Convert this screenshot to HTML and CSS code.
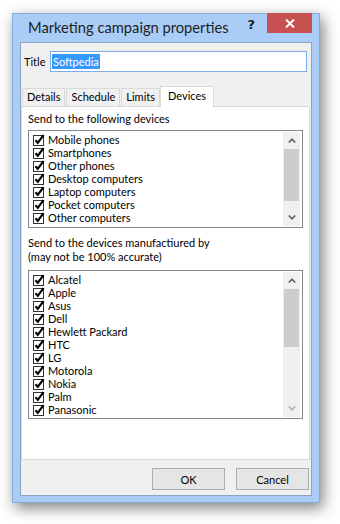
FILE: index.html
```html
<!DOCTYPE html>
<html>
<head>
  <title>Marketing campaign properties</title>
  <link rel="stylesheet" href="styles.css">
</head>
<body>

  <div class="window">
    <div class="titlebar">
      <span class="caption">Marketing campaign properties</span>
      <span class="help">?</span>
      <span class="close">
        <svg width="10" height="9" viewBox="0 0 10 9"><path d="M1 0.5 L9 8.5 M9 0.5 L1 8.5" stroke="#fff" stroke-width="2"/></svg>
      </span>
    </div>

    <div class="client">
      <div class="title-row">
        <label>Title</label>
        <div class="title-input"><span class="selected">Softpedia</span></div>
      </div>

      <div class="tabs">
        <div class="tab">Details</div>
        <div class="tab">Schedule</div>
        <div class="tab">Limits</div>
        <div class="tab active">Devices</div>
      </div>

      <div class="panel">
        <p class="group-label">Send to the following devices</p>
        <div class="listbox short">
          <ul class="items" id="devices"></ul>
          <div class="scrollbar">
            <span class="arrow"><svg width="8" height="5" viewBox="0 0 8 5"><path d="M0.8 4.5 L4 1.2 L7.2 4.5" fill="none" stroke="#606060" stroke-width="1.6"/></svg></span>
            <div class="track"><div class="thumb thumb-a"></div></div>
            <span class="arrow"><svg width="8" height="5" viewBox="0 0 8 5"><path d="M0.8 0.5 L4 3.8 L7.2 0.5" fill="none" stroke="#606060" stroke-width="1.6"/></svg></span>
          </div>
        </div>

        <p class="group-label second">Send to the devices manufactiured by<br>(may not be 100% accurate)</p>
        <div class="listbox tall">
          <ul class="items" id="makers"></ul>
          <div class="scrollbar">
            <span class="arrow"><svg width="8" height="5" viewBox="0 0 8 5"><path d="M0.8 4.5 L4 1.2 L7.2 4.5" fill="none" stroke="#606060" stroke-width="1.6"/></svg></span>
            <div class="track"><div class="thumb thumb-b"></div></div>
            <span class="arrow"><svg width="8" height="5" viewBox="0 0 8 5"><path d="M0.8 0.5 L4 3.8 L7.2 0.5" fill="none" stroke="#b0b0b0" stroke-width="1.6"/></svg></span>
          </div>
        </div>
      </div>

      <div class="buttons">
        <button>OK</button>
        <button>Cancel</button>
      </div>
    </div>
  </div>

  <script>
    const devices = ['Mobile phones', 'Smartphones', 'Other phones', 'Desktop computers',
      'Laptop computers', 'Pocket computers', 'Other computers'];
    const makers = ['Alcatel', 'Apple', 'Asus', 'Dell', 'Hewlett Packard', 'HTC', 'LG',
      'Motorola', 'Nokia', 'Palm', 'Panasonic'];

    const box = '<svg class="check" width="12" height="12" viewBox="0 0 12 12">' +
      '<rect x="0.5" y="1.5" width="10" height="10" fill="#fff" stroke="#333"/>' +
      '<path d="M2.5 6.2 L4.8 8.8 L10.5 1.2" fill="none" stroke="#000" stroke-width="2.2"/></svg>';

    function fill(id, names) {
      const ul = document.getElementById(id);
      names.forEach(name => {
        const li = document.createElement('li');
        li.innerHTML = box + '<span>' + name + '</span>';
        ul.appendChild(li);
      });
    }

    fill('devices', devices);
    fill('makers', makers);
  </script>

</body>
</html>
```

FILE: styles.css
```css
body {
  margin: 0;
  width: 340px;
  height: 524px;
  background: #fff;
  font-family: 'Lato', sans-serif;
  font-size: 11px;
  color: #000;
  overflow: hidden;
}

.window {
  margin: 13px 0 0 12px;
  width: 308px;
  height: 490px;
  box-sizing: border-box;
  background: #a9cdf6;
  border: 1px solid #86acd9;
  box-shadow: 3px 5px 14px rgba(0, 0, 0, 0.5);
  display: flex;
  flex-direction: column;
  padding: 0 7px 6px 7px;
}

.titlebar {
  height: 29px;
  display: flex;
  align-items: flex-start;
  margin-top: -1px;
}

.caption {
  font-size: 14.7px;
  line-height: 18px;
  color: #1e1e1e;
  margin: 5px 0 0 8px;
  flex: 1;
  min-width: 0;
  white-space: nowrap;
}

.help {
  font-family: 'DejaVu Sans', sans-serif;
  font-weight: bold;
  font-size: 13px;
  line-height: 15px;
  color: #222;
  margin: 4px 12px 0 0;
}

.close {
  width: 45px;
  height: 20px;
  background: #c75050;
  display: flex;
  align-items: center;
  justify-content: center;
}

.client {
  flex: 1;
  background: #f0f0f0;
  border: 1px solid #8ea3be;
  display: flex;
  flex-direction: column;
}

.title-row {
  display: flex;
  align-items: center;
  padding: 8px 4px 0 3px;
}

.title-row label {
  width: 26px;
  line-height: 14px;
}

.title-input {
  flex: 1;
  height: 19px;
  background: #fff;
  border: 1px solid #7aaee6;
  display: flex;
  align-items: center;
  padding-left: 1px;
}

.selected {
  background: #3399ff;
  color: #fff;
  line-height: 15px;
  padding: 0 1px;
}

.tabs {
  display: flex;
  align-items: flex-end;
  margin: 13px 0 0 1px;
  height: 21px;
}

.tab {
  height: 18px;
  line-height: 16px;
  padding: 0 4px;
  background: #f0f0f0;
  border: 1px solid #d9d9d9;
  border-bottom: none;
  margin-right: 1px;
  box-sizing: border-box;
}

.tab.active {
  background: #fff;
  height: 21px;
  line-height: 17px;
  padding: 0 7px;
  margin-left: -1px;
  margin-bottom: -1px;
  position: relative;
  z-index: 1;
}

.panel {
  height: 354px;
  box-sizing: border-box;
  margin: 0 1px 0 0;
  background: #fff;
  border: 1px solid #d9d9d9;
  padding: 0 6px 0 6px;
}

.group-label {
  margin: 5px 0 4px 0;
  line-height: 14px;
}

.group-label.second {
  margin: 8px 0 6px 0;
}

.listbox {
  display: flex;
  border: 1px solid #828790;
  background: #fff;
  padding: 1px 2px 1px 0;
}

.listbox.short {
  height: 94px;
}

.listbox.tall {
  height: 145px;
}

.items {
  list-style: none;
  margin: 0;
  padding: 1px 0 0 4px;
  flex: 1;
}

.items li {
  height: 13px;
  line-height: 13px;
  display: flex;
  align-items: center;
  white-space: nowrap;
}

.check {
  margin-right: 3px;
  flex-shrink: 0;
}

.scrollbar {
  width: 17px;
  background: #f0f0f0;
  display: flex;
  flex-direction: column;
}

.arrow {
  height: 17px;
  display: flex;
  align-items: center;
  justify-content: center;
}

.track {
  flex: 1;
}

.thumb {
  margin: 0 1px;
  background: #cdcdcd;
}

.thumb-a {
  height: 52px;
}

.thumb-b {
  height: 58px;
}

.buttons {
  display: flex;
  justify-content: flex-end;
  gap: 11px;
  padding: 8px 2px 0 0;
}

button {
  width: 73px;
  height: 22px;
  font-family: 'Lato', sans-serif;
  font-size: 11px;
  background: #e5e5e5;
  border: 1px solid #acacac;
  padding: 0;
}
```
